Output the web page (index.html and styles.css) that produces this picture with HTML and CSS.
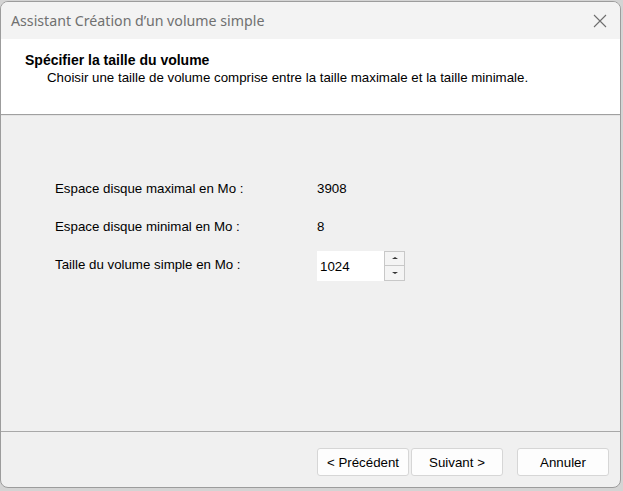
FILE: index.html
```html
<!DOCTYPE html>
<html lang="fr">
<head>
<meta charset="utf-8">
<title>Assistant Création d’un volume simple</title>
<link rel="stylesheet" href="styles.css">
</head>
<body>
<div class="window">
  <div class="titlebar">
    <span class="title">Assistant Création d’un volume simple</span>
    <svg class="close" width="14" height="14" viewBox="0 0 14 14"><path d="M1 1 L13 13 M13 1 L1 13" stroke="#6e6e6e" stroke-width="1.1" fill="none"/></svg>
  </div>
  <div class="header">
    <div class="heading">Spécifier la taille du volume</div>
    <div class="subheading">Choisir une taille de volume comprise entre la taille maximale et la taille minimale.</div>
  </div>
  <div class="content">
    <div class="grid">
      <div class="label">Espace disque maximal en Mo :</div>
      <div class="value">3908</div>
      <div class="label">Espace disque minimal en Mo :</div>
      <div class="value">8</div>
      <div class="label">Taille du volume simple en Mo :</div>
      <div class="spin">
        <div class="spin-input">1024</div>
        <div class="spin-buttons">
          <div class="spin-btn"><span class="arrow-up"></span></div>
          <div class="spin-btn"><span class="arrow-down"></span></div>
        </div>
      </div>
    </div>
  </div>
  <div class="footer">
    <button class="btn">&lt; Précédent</button>
    <button class="btn">Suivant &gt;</button>
    <button class="btn cancel">Annuler</button>
  </div>
</div>
</body>
</html>
```
FILE: styles.css
```css
html, body {
  margin: 0;
  padding: 0;
}
body {
  width: 623px;
  height: 491px;
  background: #d4d4d4;
  font-family: "Liberation Sans", Arial, sans-serif;
  font-size: 13.3px;
  color: #000;
  overflow: hidden;
}
.window {
  box-sizing: border-box;
  margin: 1px 0 0 0;
  width: 621px;
  height: 487px;
  border: 1px solid #9c9c9c;
  border-radius: 8px;
  background: #f0f0f0;
  display: flex;
  flex-direction: column;
  overflow: hidden;
}
.titlebar {
  height: 37px;
  flex: none;
  background: #f3f3f3;
  display: flex;
  align-items: center;
  justify-content: space-between;
  padding: 0 13px 0 10px;
}
.title {
  font-family: "Noto Sans", "Open Sans", sans-serif;
  font-size: 14.2px;
  color: #707070;
  margin-top: -1px;
}
.close {
  display: block;
}
.header {
  height: 76px;
  flex: none;
  background: #ffffff;
  border-bottom: 1px solid #a0a0a0;
  padding: 13px 0 0 24px;
  box-sizing: border-box;
}
.heading {
  font-weight: bold;
  font-size: 14px;
  line-height: 16px;
}
.subheading {
  margin: 2px 0 0 22px;
  line-height: 16px;
}
.content {
  height: 317px;
  flex: none;
  box-sizing: border-box;
  border-top: 1px solid #e4e4e4;
  border-bottom: 1px solid #a8a8a8;
  padding: 53px 0 0 54px;
}
.grid {
  display: grid;
  grid-template-columns: 262px auto;
  grid-template-rows: 38px 38px 38px;
  align-items: center;
}
.spin {
  display: flex;
  width: 88px;
  height: 30px;
  margin-top: 3px;
}
.spin-input {
  width: 67px;
  height: 30px;
  background: #fff;
  box-sizing: border-box;
  padding: 8px 0 0 3px;
  line-height: 16px;
}
.spin-buttons {
  width: 21px;
  display: flex;
  flex-direction: column;
  border: 1px solid #c8c8c8;
  box-sizing: border-box;
  background: #e9e9e9;
}
.spin-btn {
  flex: 1;
  display: flex;
  align-items: center;
  justify-content: center;
  background: #f4f4f4;
}
.spin-btn + .spin-btn {
  border-top: 1px solid #c8c8c8;
}
.arrow-up {
  width: 0;
  height: 0;
  border-left: 3px solid transparent;
  border-right: 3px solid transparent;
  border-bottom: 2px solid #333;
}
.arrow-down {
  width: 0;
  height: 0;
  border-left: 3px solid transparent;
  border-right: 3px solid transparent;
  border-top: 2px solid #333;
}
.footer {
  flex: 1;
  display: flex;
  justify-content: flex-end;
  align-items: flex-start;
  padding: 16px 11px 0 0;
  gap: 2px;
}
.btn {
  width: 92px;
  height: 28px;
  background: #fdfdfd;
  border: 1px solid #d6d6d6;
  border-radius: 3px;
  font-family: "Liberation Sans", Arial, sans-serif;
  font-size: 13.3px;
  color: #000;
  padding: 0;
}
.btn.cancel {
  margin-left: 12px;
}
```
